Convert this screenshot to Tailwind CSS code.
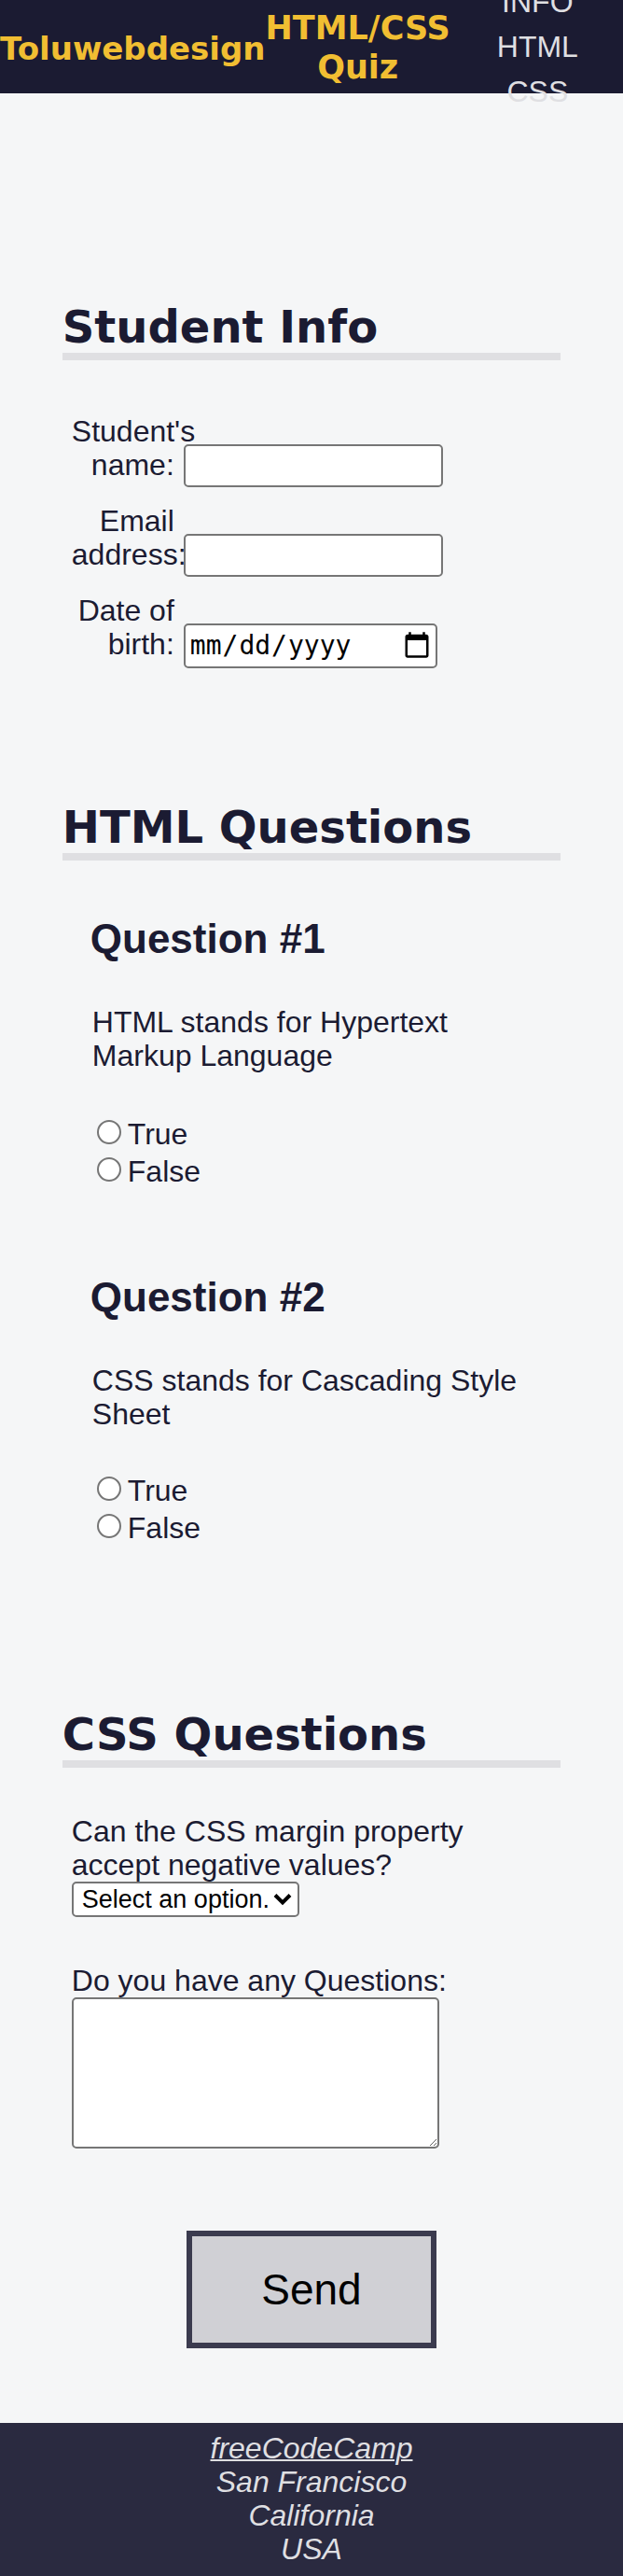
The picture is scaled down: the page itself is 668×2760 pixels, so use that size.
<!DOCTYPE html>
<html lang="en">
<head>
<meta charset="utf-8">
<meta name="viewport" content="width=device-width, initial-scale=1">
<title>HTML/CSS Quiz</title>
<script src="https://cdn.jsdelivr.net/npm/@tailwindcss/browser@4"></script>
</head>
<body class="bg-[#f5f6f7] text-[#1b1b32] font-['Liberation_Sans',Arial,sans-serif] text-[32px] leading-[36px]">
<header class="flex h-[100px] items-center justify-between bg-[#1b1b32]">
  <div class="shrink-0 pt-1 font-['DejaVu_Sans',Verdana,sans-serif] text-[34px] leading-[42px] font-bold text-[#f1be32]">Toluwebdesign</div>
  <h1 class="flex-1 pt-[2px] text-center font-['DejaVu_Sans',Verdana,sans-serif] text-[35px] leading-[42px] font-bold text-[#f1be32]">HTML/CSS Quiz</h1>
  <nav class="w-[28%] shrink-0">
    <ul class="flex flex-col items-center gap-3 text-[#dfdfe2]">
      <li><a href="#student-info">INFO</a></li>
      <li><a href="#html-questions">HTML</a></li>
      <li><a href="#css-questions">CSS</a></li>
    </ul>
  </nav>
</header>
<main class="px-[10%] pt-[222px]">
  <form>
    <section aria-labelledby="student-info">
      <h2 id="student-info" class="border-b-8 border-[#dfdfe2] font-['DejaVu_Sans',Verdana,sans-serif] text-[48px] leading-[56px] font-bold">Student Info</h2>
      <div class="flex flex-col gap-[18px] pt-[58px] pl-[10px]">
        <div class="flex items-start gap-[10px]">
          <label for="name" class="w-[110px] shrink-0 text-right">Student's name:</label>
          <input id="name" type="text" class="mt-8 h-[46px] w-[278px] rounded-[5px] border-2 border-[#767676] bg-white px-1">
        </div>
        <div class="flex items-start gap-[10px]">
          <label for="email" class="w-[110px] shrink-0 text-right">Email address:</label>
          <input id="email" type="email" class="z-10 mt-8 h-[46px] w-[278px] rounded-[5px] border-2 border-[#767676] bg-white px-1">
        </div>
        <div class="flex items-start gap-[10px]">
          <label for="dob" class="w-[110px] shrink-0 text-right">Date of birth:</label>
          <input id="dob" type="date" class="mt-8 h-[48px] w-[272px] rounded-[5px] border-2 border-[#767676] bg-white px-1 font-['DejaVu_Sans_Mono',monospace] text-[28px] text-black [&::-webkit-calendar-picker-indicator]:size-8 [&::-webkit-calendar-picker-indicator]:p-0">
        </div>
      </div>
    </section>
    <section aria-labelledby="html-questions" class="pt-[142px]">
      <h2 id="html-questions" class="border-b-8 border-[#dfdfe2] font-['DejaVu_Sans',Verdana,sans-serif] text-[48px] leading-[56px] font-bold">HTML Questions</h2>
      <div class="flex flex-col gap-[91px] px-[30px] pt-[58px]">
        <fieldset>
          <h3 class="text-[44px] leading-[52px] font-bold">Question #1</h3>
          <p class="pt-[45px] pl-[2px]">HTML stands for Hypertext Markup Language</p>
          <div class="flex flex-col gap-1 pt-12 pl-[7px]">
            <label class="flex items-start gap-[7px]"><input type="radio" name="q1" class="mt-[3px] size-[26px] appearance-none rounded-full border-2 border-[#767676] bg-white checked:border-8">True</label>
            <label class="flex items-start gap-[7px]"><input type="radio" name="q1" class="mt-[3px] size-[26px] appearance-none rounded-full border-2 border-[#767676] bg-white checked:border-8">False</label>
          </div>
        </fieldset>
        <fieldset>
          <h3 class="text-[44px] leading-[52px] font-bold">Question #2</h3>
          <p class="pt-[45px] pl-[2px]">CSS stands for Cascading Style Sheet</p>
          <div class="flex flex-col gap-1 pt-[46px] pl-[7px]">
            <label class="flex items-start gap-[7px]"><input type="radio" name="q2" class="mt-[3px] size-[26px] appearance-none rounded-full border-2 border-[#767676] bg-white checked:border-8">True</label>
            <label class="flex items-start gap-[7px]"><input type="radio" name="q2" class="mt-[3px] size-[26px] appearance-none rounded-full border-2 border-[#767676] bg-white checked:border-8">False</label>
          </div>
        </fieldset>
      </div>
    </section>
    <section aria-labelledby="css-questions" class="pt-[175px]">
      <h2 id="css-questions" class="border-b-8 border-[#dfdfe2] font-['DejaVu_Sans',Verdana,sans-serif] text-[48px] leading-[56px] font-bold">CSS Questions</h2>
      <div class="flex flex-col items-start px-[10px] pt-[50px]">
        <label for="margin" class="max-w-[440px]">Can the CSS margin property accept negative values?</label>
        <div class="relative">
          <select id="margin" class="block h-[38px] w-[244px] appearance-none rounded-[5px] border-2 border-[#767676] bg-white pl-[9px] text-[27px] leading-[30px] text-black">
            <option>Select an option.</option>
            <option>Yes</option>
            <option>No</option>
          </select>
          <svg class="pointer-events-none absolute top-3 right-2 h-[14px] w-[20px]" viewBox="0 0 20 14" fill="none" stroke="#000" stroke-width="4"><path d="M2 2.5 10 10.500 18 2.500"/></svg>
        </div>
        <label for="notes" class="pt-[50px]">Do you have any Questions:</label>
        <textarea id="notes" class="block h-[162px] w-[394px] rounded-[5px] border-2 border-[#767676] bg-white p-1"></textarea>
      </div>
    </section>
    <button type="submit" class="mx-auto mt-[88px] block h-[126px] w-1/2 border-6 border-[#3b3b4f] bg-[#d0d0d5] text-[46px] text-black">Send</button>
  </form>
</main>
<footer class="mt-20 bg-[#2a2a40] pt-[9px] pb-[11px] text-center text-[#dfdfe2]">
  <address><a href="https://www.freecodecamp.org" class="underline decoration-2">freeCodeCamp</a><br>San Francisco<br>California<br>USA</address>
</footer>
</body>
</html>
